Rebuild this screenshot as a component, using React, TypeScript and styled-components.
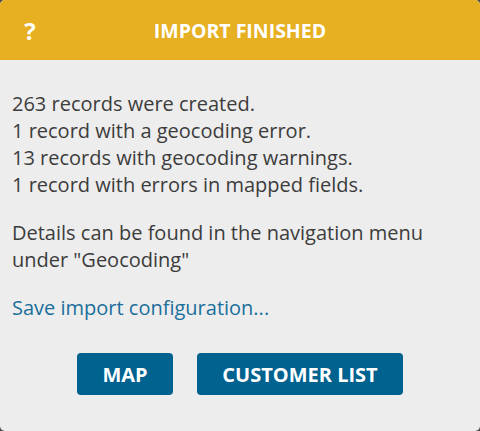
import styled, { createGlobalStyle } from 'styled-components';

const GlobalStyle = createGlobalStyle`
	html, body {
		margin: 0;
		padding: 0;
		background: #4d4d4d;
	}
	body {
		font-family: 'Open Sans', 'Noto Sans', sans-serif;
	}
`;

const Dialog = styled.div`
	width: 480px;
	height: 431px;
	background: #ededed;
	border-radius: 5px;
	overflow: hidden;
	display: flex;
	flex-direction: column;
`;

const Header = styled.div`
	height: 60px;
	background: #e6b022;
	color: #ffffff;
	display: grid;
	grid-template-columns: 60px 1fr 60px;
	align-items: center;
	font-weight: 700;
`;

const HelpMark = styled.span`
	font-size: 24px;
	text-align: center;
`;

const Title = styled.div`
	font-size: 19.5px;
	text-align: center;
`;

const Body = styled.div`
	flex: 1;
	padding: 30px 12px 0 12px;
	color: #3c3c3c;
	font-size: 20px;
	line-height: 27px;
	display: flex;
	flex-direction: column;
`;

const Paragraph = styled.p`
	margin: 0 0 21px 0;
`;

const Link = styled.a`
	color: #1b6f9c;
	text-decoration: none;
	cursor: pointer;
`;

const Actions = styled.div`
	display: flex;
	justify-content: center;
	gap: 24px;
	margin-top: 32px;
`;

const Button = styled.button<{ $width: number }>`
	width: ${(p) => p.$width}px;
	height: 42px;
	border: none;
	border-radius: 4px;
	background: #00628f;
	color: #ffffff;
	font-family: 'Open Sans', 'Noto Sans', sans-serif;
	font-weight: 700;
	font-size: 20px;
	cursor: pointer;
`;

const App = () => {
	return (
		<>
			<GlobalStyle />
			<Dialog>
				<Header>
					<HelpMark>?</HelpMark>
					<Title>IMPORT FINISHED</Title>
				</Header>
				<Body>
					<Paragraph>
						263 records were created.
						<br />1 record with a geocoding error.
						<br />13 records with geocoding warnings.
						<br />1 record with errors in mapped fields.
					</Paragraph>
					<Paragraph>
						Details can be found in the navigation menu
						<br />
						under "Geocoding"
					</Paragraph>
					<Link>Save import configuration...</Link>
					<Actions>
						<Button $width={96}>MAP</Button>
						<Button $width={206}>CUSTOMER LIST</Button>
					</Actions>
				</Body>
			</Dialog>
		</>
	);
};

export default App;
